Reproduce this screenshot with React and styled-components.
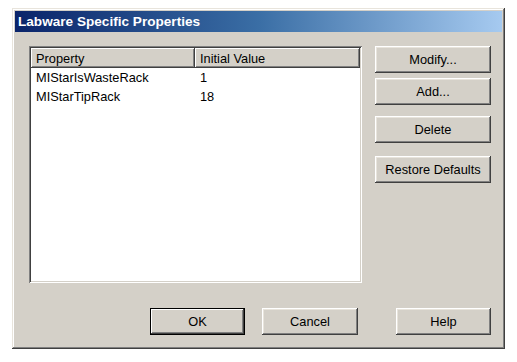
import React from "react";
import styled, { createGlobalStyle } from "styled-components";

const Global = createGlobalStyle`
  html, body { margin: 0; padding: 0; background: #fff; }
  body { font-family: "Liberation Sans", Arial, sans-serif; }
`;

const Window = styled.div`
  margin: 8px 0 0 12px;
  width: 493px;
  height: 341px;
  box-sizing: border-box;
  padding: 3px;
  background: #d4d0c8;
  box-shadow: inset -1px -1px #404040, inset 1px 1px #e8e4dc,
    inset -2px -2px #808080, inset 2px 2px #ffffff;
  display: flex;
  flex-direction: column;
`;

const TitleBar = styled.div`
  height: 21px;
  display: flex;
  align-items: center;
  padding-left: 3px;
  background: linear-gradient(to right, #0a246a 0%, #3a6ea5 50%, #a6caf0 100%);
  color: #fff;
  font-weight: bold;
  font-size: 13.6px;
`;

const Body = styled.div`
  display: flex;
  flex-direction: column;
  padding: 14px 0 0 14px;
`;

const MainRow = styled.div`
  display: flex;
  align-items: flex-start;
`;

const ListView = styled.div`
  width: 333px;
  height: 237px;
  box-sizing: border-box;
  padding: 2px;
  background: #fff;
  box-shadow: inset 1px 1px #808080, inset -1px -1px #ffffff,
    inset 2px 2px #404040, inset -2px -2px #d4d0c8;
  display: flex;
  flex-direction: column;
`;

const HeaderRow = styled.div`
  display: flex;
  height: 20px;
`;

const HeaderCell = styled.div`
  width: ${(p) => p.$w}px;
  box-sizing: border-box;
  padding-left: 5px;
  display: flex;
  align-items: center;
  background: #d4d0c8;
  font-size: 12.8px;
  color: #000;
  box-shadow: inset -1px -1px #404040, inset 1px 1px #ffffff,
    inset -2px -2px #808080;
`;

const Row = styled.div`
  display: flex;
  height: 19px;
  align-items: center;
`;

const Cell = styled.div`
  width: ${(p) => p.$w}px;
  box-sizing: border-box;
  padding-left: 5px;
  font-size: 12.8px;
  color: #000;
`;

const SideButtons = styled.div`
  margin-left: 13px;
  display: flex;
  flex-direction: column;
`;

const Button = styled.button`
  width: ${(p) => p.$w || 116}px;
  height: 27px;
  margin-top: ${(p) => p.$mt || 0}px;
  margin-left: ${(p) => p.$ml || 0}px;
  padding: 0;
  border: none;
  background: #d4d0c8;
  font-family: "Liberation Sans", Arial, sans-serif;
  font-size: 12.8px;
  color: #000;
  box-shadow: ${(p) =>
    p.$default
      ? "inset 0 0 0 1px #000, inset -2px -2px #404040, inset 2px 2px #ffffff, inset -3px -3px #808080"
      : "inset -1px -1px #404040, inset 1px 1px #ffffff, inset -2px -2px #808080, inset 2px 2px #e8e4dc"};
`;

const BottomRow = styled.div`
  display: flex;
  margin-top: 25px;
  padding-left: 121px;
`;

export default function App() {
  return (
    <>
      <Global />
      <Window>
        <TitleBar>Labware Specific Properties</TitleBar>
        <Body>
          <MainRow>
            <ListView>
              <HeaderRow>
                <HeaderCell $w={164}>Property</HeaderCell>
                <HeaderCell $w={165}>Initial Value</HeaderCell>
              </HeaderRow>
              <Row>
                <Cell $w={164}>MIStarIsWasteRack</Cell>
                <Cell $w={165}>1</Cell>
              </Row>
              <Row>
                <Cell $w={164}>MIStarTipRack</Cell>
                <Cell $w={165}>18</Cell>
              </Row>
            </ListView>
            <SideButtons>
              <Button>Modify...</Button>
              <Button $mt={5}>Add...</Button>
              <Button $mt={11}>Delete</Button>
              <Button $mt={13}>Restore Defaults</Button>
            </SideButtons>
          </MainRow>
          <BottomRow>
            <Button $w={95} $default>OK</Button>
            <Button $w={96} $ml={17}>Cancel</Button>
            <Button $w={95} $ml={38}>Help</Button>
          </BottomRow>
        </Body>
      </Window>
    </>
  );
}
